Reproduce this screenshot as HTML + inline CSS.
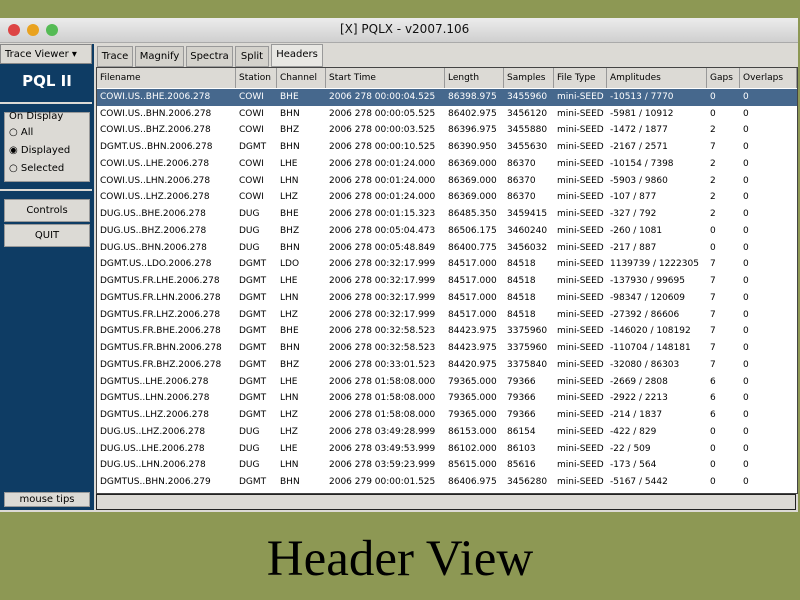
<!DOCTYPE html>
<html><head><style>
body{margin:0;width:800px;height:600px;background:#8d9854;position:relative;overflow:hidden;font-family:"DejaVu Sans","Liberation Sans",sans-serif;}
.win{position:absolute;left:0;top:18px;width:798px;height:494px;background:#dcdad5;}
.title{position:absolute;left:0;top:0;width:798px;height:24px;background:linear-gradient(#ececec,#cfcfcf);border-bottom:1px solid #aaa;}
.title .t{position:absolute;left:340px;top:4px;font-size:12px;color:#111}
.dot{position:absolute;top:6px;width:12px;height:12px;border-radius:50%}
.left{position:absolute;left:0;top:26px;width:94px;height:466px;background:#0e3c64;}
.tv{position:absolute;left:0;top:0;width:92px;height:20px;background:#dcdad5;border:1px solid #888;font-size:10px;line-height:20px;padding-left:4px;box-sizing:border-box}
.pql{position:absolute;left:0;top:28px;width:94px;text-align:center;color:#fff;font-weight:bold;font-size:15px}
.grp{position:absolute;left:4px;top:68px;width:84px;height:68px;background:#dcdad5;border:1px solid #999;font-size:10px}
.btn{position:absolute;left:4px;width:84px;height:21px;background:#dcdad5;border:1px solid #999;font-size:10px;text-align:center;line-height:21px}
.tabs{position:absolute;left:97px;top:26px;font-size:10px}
.tab{position:absolute;top:2px;height:19px;line-height:19px;border:1px solid #999;background:#d4d2cc;text-align:center}
.tbl{position:absolute;left:96px;top:49px;width:700px;height:425px;background:#fff;border:1px solid #444;overflow:hidden}
.h,.r{position:absolute;left:0;height:17px;width:700px;font-size:9px;line-height:17px;white-space:nowrap}
.h{background:#dcdad5;height:20px;line-height:20px;top:0}
.h span,.r span{position:absolute;top:0;padding-left:3px}
.h span{border-right:1px solid #999;height:20px;box-sizing:border-box}
.sel{background:#46688d;color:#fff}
.status{position:absolute;left:96px;top:476px;width:698px;height:14px;border:1px solid #222;background:#dcdad5}
.cap{position:absolute;top:530px;width:800px;text-align:center;font-family:"Liberation Serif",serif;font-size:51px;color:#000}
</style></head><body>
<div class="win">
<div class="title"><div class="dot" style="left:8px;background:#d44"></div><div class="dot" style="left:27px;background:#e9a21f"></div><div class="dot" style="left:46px;background:#5b5"></div><div class="t">[X] PQLX - v2007.106</div></div>
<div class="left">
<div class="tv">Trace Viewer ▾</div>
<div class="pql">PQL II</div>
<div style="position:absolute;left:0;top:58px;width:92px;height:2px;background:#dcdad5"></div>
<div class="grp"><div style="position:absolute;left:4px;top:-2px">On Display</div>
<div style="position:absolute;left:4px;top:14px">○ All</div><div style="position:absolute;left:4px;top:32px">◉ Displayed</div><div style="position:absolute;left:4px;top:50px">○ Selected</div></div>
<div style="position:absolute;left:0;top:145px;width:92px;height:2px;background:#dcdad5"></div>
<div class="btn" style="top:155px">Controls</div>
<div class="btn" style="top:180px">QUIT</div>
<div class="btn" style="top:448px;height:13px;line-height:13px">mouse tips</div>
</div>
<div class="tabs">
<div class="tab" style="left:0;width:34px">Trace</div><div class="tab" style="left:38px;width:47px">Magnify</div><div class="tab" style="left:89px;width:45px">Spectra</div><div class="tab" style="left:138px;width:32px">Split</div><div class="tab" style="left:174px;width:50px;background:#e8e7e3;top:0;height:21px">Headers</div>
</div>
<div class="tbl" id="t"></div>
<div class="status"></div>
</div>
<div class="cap">Header View</div>
<script>
var x=[0,139,180,229,348,407,457,510,610,643],
hd=["Filename","Station","Channel","Start Time","Length","Samples","File Type","Amplitudes","Gaps","Overlaps"],
rows=[
["COWI.US..BHE.2006.278","COWI","BHE","2006 278 00:00:04.525","86398.975","3455960","mini-SEED","-10513 / 7770","0","0"],
["COWI.US..BHN.2006.278","COWI","BHN","2006 278 00:00:05.525","86402.975","3456120","mini-SEED","-5981 / 10912","0","0"],
["COWI.US..BHZ.2006.278","COWI","BHZ","2006 278 00:00:03.525","86396.975","3455880","mini-SEED","-1472 / 1877","2","0"],
["DGMT.US..BHN.2006.278","DGMT","BHN","2006 278 00:00:10.525","86390.950","3455630","mini-SEED","-2167 / 2571","7","0"],
["COWI.US..LHE.2006.278","COWI","LHE","2006 278 00:01:24.000","86369.000","86370","mini-SEED","-10154 / 7398","2","0"],
["COWI.US..LHN.2006.278","COWI","LHN","2006 278 00:01:24.000","86369.000","86370","mini-SEED","-5903 / 9860","2","0"],
["COWI.US..LHZ.2006.278","COWI","LHZ","2006 278 00:01:24.000","86369.000","86370","mini-SEED","-107 / 877","2","0"],
["DUG.US..BHE.2006.278","DUG","BHE","2006 278 00:01:15.323","86485.350","3459415","mini-SEED","-327 / 792","2","0"],
["DUG.US..BHZ.2006.278","DUG","BHZ","2006 278 00:05:04.473","86506.175","3460240","mini-SEED","-260 / 1081","0","0"],
["DUG.US..BHN.2006.278","DUG","BHN","2006 278 00:05:48.849","86400.775","3456032","mini-SEED","-217 / 887","0","0"],
["DGMT.US..LDO.2006.278","DGMT","LDO","2006 278 00:32:17.999","84517.000","84518","mini-SEED","1139739 / 1222305","7","0"],
["DGMTUS.FR.LHE.2006.278","DGMT","LHE","2006 278 00:32:17.999","84517.000","84518","mini-SEED","-137930 / 99695","7","0"],
["DGMTUS.FR.LHN.2006.278","DGMT","LHN","2006 278 00:32:17.999","84517.000","84518","mini-SEED","-98347 / 120609","7","0"],
["DGMTUS.FR.LHZ.2006.278","DGMT","LHZ","2006 278 00:32:17.999","84517.000","84518","mini-SEED","-27392 / 86606","7","0"],
["DGMTUS.FR.BHE.2006.278","DGMT","BHE","2006 278 00:32:58.523","84423.975","3375960","mini-SEED","-146020 / 108192","7","0"],
["DGMTUS.FR.BHN.2006.278","DGMT","BHN","2006 278 00:32:58.523","84423.975","3375960","mini-SEED","-110704 / 148181","7","0"],
["DGMTUS.FR.BHZ.2006.278","DGMT","BHZ","2006 278 00:33:01.523","84420.975","3375840","mini-SEED","-32080 / 86303","7","0"],
["DGMTUS..LHE.2006.278","DGMT","LHE","2006 278 01:58:08.000","79365.000","79366","mini-SEED","-2669 / 2808","6","0"],
["DGMTUS..LHN.2006.278","DGMT","LHN","2006 278 01:58:08.000","79365.000","79366","mini-SEED","-2922 / 2213","6","0"],
["DGMTUS..LHZ.2006.278","DGMT","LHZ","2006 278 01:58:08.000","79365.000","79366","mini-SEED","-214 / 1837","6","0"],
["DUG.US..LHZ.2006.278","DUG","LHZ","2006 278 03:49:28.999","86153.000","86154","mini-SEED","-422 / 829","0","0"],
["DUG.US..LHE.2006.278","DUG","LHE","2006 278 03:49:53.999","86102.000","86103","mini-SEED","-22 / 509","0","0"],
["DUG.US..LHN.2006.278","DUG","LHN","2006 278 03:59:23.999","85615.000","85616","mini-SEED","-173 / 564","0","0"],
["DGMTUS..BHN.2006.279","DGMT","BHN","2006 279 00:00:01.525","86406.975","3456280","mini-SEED","-5167 / 5442","0","0"]];
var h='<div class="h">';hd.forEach(function(s,i){h+='<span style="left:'+x[i]+'px;width:'+((x[i+1]||700)-x[i])+'px">'+s+'</span>'});h+='</div>';
rows.forEach(function(r,j){h+='<div class="r'+(j==0?' sel':'')+'" style="top:'+(21+j*16.74)+'px">';r.forEach(function(s,i){h+='<span style="left:'+x[i]+'px">'+s+'</span>'});h+='</div>'});
document.getElementById('t').innerHTML=h;
</script>
</body></html>
